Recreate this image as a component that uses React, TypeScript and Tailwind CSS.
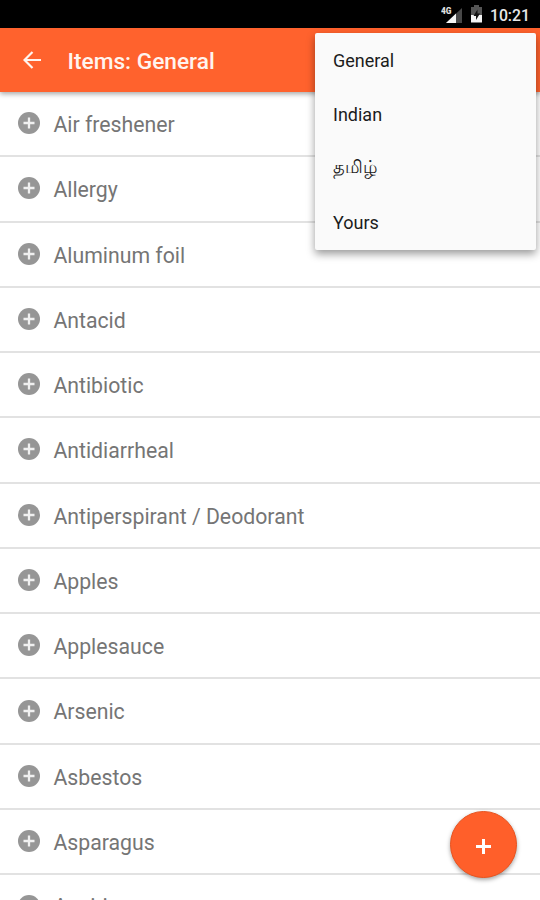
const items = [
  "Air freshener",
  "Allergy",
  "Aluminum foil",
  "Antacid",
  "Antibiotic",
  "Antidiarrheal",
  "Antiperspirant / Deodorant",
  "Apples",
  "Applesauce",
  "Arsenic",
  "Asbestos",
  "Asparagus",
  "Aspirin",
];

const menu = [
  { label: "General", className: "pt-[2px]" },
  { label: "Indian", className: "pt-[2px]" },
  { label: "தமிழ்", className: "pb-[2px] font-medium" },
  { label: "Yours", className: "pt-[2px]" },
];

function StatusBar() {
  return (
    <div className="flex h-7 items-center justify-end bg-black pr-[10px] text-white">
      <svg width="22" height="20" viewBox="0 0 22 20" className="mt-[2px] mr-[7px]">
        <path d="M21 3v15H5z" fill="#484848" />
        <path d="M15 8.600v9.400H5z" fill="#f5f5f5" />
        <text x="0" y="9" fontSize="8.500" fontWeight="900" fontFamily="Roboto, sans-serif" fill="#e0e0e0" textLength="10.500" lengthAdjust="spacingAndGlyphs">
          4G
        </text>
      </svg>
      <svg width="13" height="18" viewBox="0 0 13 18" className="mr-[7px]">
        <path d="M4 0h5v2h3v8H1V2h3z" fill="#555" />
        <path d="M1 10h11v7.500H1z" fill="#f5f5f5" />
        <path d="M7.500 4.500 3.500 11H6v4l4-6.500H7.500z" fill="#111" />
      </svg>
      <span className="pt-[3px] text-[15.8px] leading-none font-medium text-[#e8e8e8]">10:21</span>
    </div>
  );
}

function AddCircle() {
  return (
    <svg width="22" height="22" viewBox="0 0 22 22" className="-mt-px shrink-0">
      <circle cx="11" cy="11" r="11" fill="#969696" />
      <path d="M11 5.500v11M5.500 11h11" stroke="#f0f0f0" strokeWidth="2.300" />
    </svg>
  );
}

export default function App() {
  return (
    <div className="relative h-[900px] w-[540px] overflow-hidden bg-white font-['Roboto',sans-serif]">
      <StatusBar />
      <header className="relative flex h-[64px] items-center bg-[#ff622d] pl-[23px] shadow-[0_2px_5px_rgba(0,0,0,0.35)]">
        <svg width="18" height="18" viewBox="0 0 18 18" className="shrink-0">
          <path d="M18 9H1.500M9.500 1 1.500 9l8 8" fill="none" stroke="#fff4ef" strokeWidth="2.200" />
        </svg>
        <h1 className="ml-[26.500px] pt-[5px] text-[22.700px] leading-none font-medium text-[#fff4ef]">Items: General</h1>
      </header>
      <ul>
        {items.map((item) => (
          <li key={item} className="group flex h-[65.27px] items-center border-b-2 border-[#e2e2e2] pl-[17.600px]">
            <AddCircle />
            <span className="ml-[13.800px] pt-[2px] text-[21.250px] leading-none text-[#757575] group-last:pt-0">{item}</span>
          </li>
        ))}
      </ul>
      <div className="absolute top-[33px] left-[315px] w-[221px] rounded-[2px] bg-[#fafafa] pb-px shadow-[0_4px_9px_rgba(0,0,0,0.4)]">
        {menu.map(({ label, className }) => (
          <div key={label} className={`flex h-[54px] items-center pl-[18px] text-[18px] leading-none text-[#1c1c1c] ${className}`}>
            {label}
          </div>
        ))}
      </div>
      <button
        aria-label="Add"
        className="absolute top-[811px] left-[450px] flex h-[67px] w-[67px] items-center justify-center rounded-full border border-[#e8531f] bg-[#ff5f2a] shadow-[0_2px_4px_rgba(0,0,0,0.35)]"
      >
        <svg width="15" height="15" viewBox="0 0 15 15" className="mt-[3px]">
          <path d="M7.500 0v15M0 7.500h15" stroke="#fff" strokeWidth="3" />
        </svg>
      </button>
    </div>
  );
}
